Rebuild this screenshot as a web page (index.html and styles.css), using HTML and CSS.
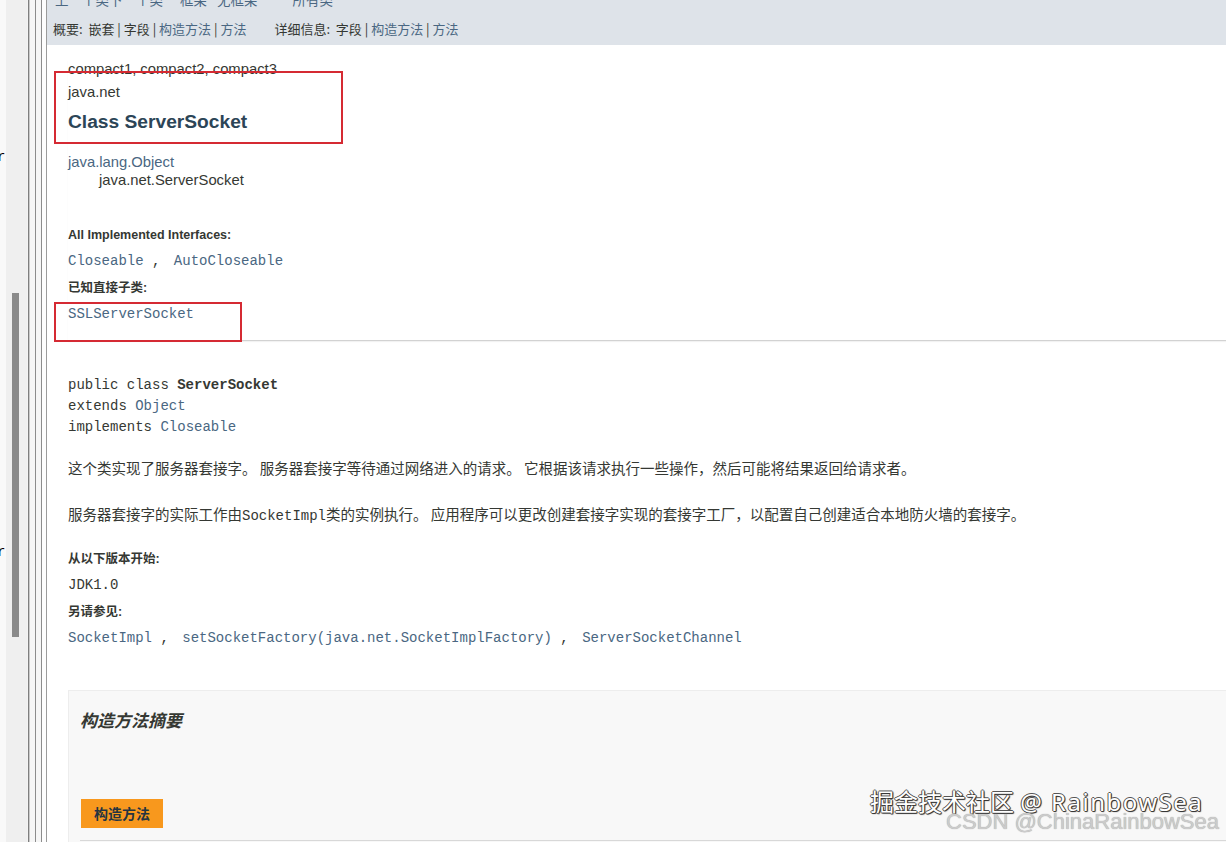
FILE: index.html
```html
<!DOCTYPE html>
<html lang="zh-CN">
<head>
    <meta charset="UTF-8">
    <meta name="viewport" content="width=device-width, initial-scale=1.0">
    <title>ServerSocket (Java Platform SE 8)</title>
    <link rel="stylesheet" href="styles.css">
</head>
<body>
<div class="window">
    <div class="gutter">
        <span class="stray first">r</span>
        <span class="stray second">r</span>
    </div>
    <div class="track"><div class="thumb"></div></div>
    <div class="frame-edge"></div>

    <div class="doc">
        <div class="topnav">
            <div class="navbar">
                <span>上一个类</span><span>下一个类</span>
                <span class="gap-a">框架</span><span class="gap-b">无框架</span>
                <span class="gap-c">所有类</span>
            </div>
            <div class="subnav">
                <span>概要:&nbsp; 嵌套 |&nbsp;字段 |&nbsp;<a>构造方法</a> |&nbsp;<a>方法</a></span>
                <span class="detail">详细信息:&nbsp; 字段 |&nbsp;<a>构造方法</a> |&nbsp;<a>方法</a></span>
            </div>
        </div>

        <div class="content">
            <div class="class-info">
                <div class="subtitle">compact1, compact2, compact3</div>
                <div class="subtitle pkg">java.net</div>
                <h2 class="title">Class ServerSocket</h2>

                <div class="inheritance">
                    <a>java.lang.Object</a>
                    <div class="child">java.net.ServerSocket</div>
                </div>

                <dl class="notes">
                    <dt class="first-dt">All Implemented Interfaces:</dt>
                    <dd><a>Closeable</a><span class="sep"> , </span><a>AutoCloseable</a></dd>
                    <dt>已知直接子类:</dt>
                    <dd><a>SSLServerSocket</a></dd>
                </dl>
            </div>

            <pre class="signature">public class <b>ServerSocket</b>
extends <a>Object</a>
implements <a>Closeable</a></pre>

            <p class="para">这个类实现了服务器套接字。 服务器套接字等待通过网络进入的请求。 它根据该请求执行一些操作，然后可能将结果返回给请求者。</p>
            <p class="para second">服务器套接字的实际工作由<code>SocketImpl</code>类的实例执行。 应用程序可以更改创建套接字实现的套接字工厂，以配置自己创建适合本地防火墙的套接字。</p>

            <dl class="notes since">
                <dt class="first-dt">从以下版本开始:</dt>
                <dd>JDK1.0</dd>
                <dt>另请参见:</dt>
                <dd><a>SocketImpl</a><span class="sep"> , </span><a>setSocketFactory(java.net.SocketImplFactory)</a><span class="sep"> , </span><a>ServerSocketChannel</a></dd>
            </dl>

            <div class="summary">
                <h3>构造方法摘要</h3>
                <div class="caption"><span class="tab">构造方法</span></div>
                <div class="table-top"></div>
            </div>
        </div>

        <!-- red marks drawn over the page -->
        <div class="mark mark-title"></div>
        <div class="mark mark-sub"></div>
    </div>

    <div class="wm-main">掘金技术社区 <span class="wm-latin">@ RainbowSea</span></div>
    <div class="wm-csdn">CSDN @ChinaRainbowSea</div>
</div>
</body>
</html>
```

FILE: styles.css
```css
body {
    margin: 0;
    font-family: "Liberation Sans", Arial, "Noto Sans CJK SC", sans-serif;
    color: #353833;
    background: #fff;
}

a {
    color: #4a6782;
}

.window {
    display: flex;
    height: 842px;
    overflow: hidden;
    position: relative;
}

/* left frame: stray text, scrollbar, frame borders */
.gutter {
    width: 6px;
    flex: none;
    background: #f9f9f9;
    display: flex;
    flex-direction: column;
    overflow: hidden;
    font-family: "Liberation Mono", monospace;
    font-size: 14px;
    line-height: 14px;
    color: #000;
}

.stray {
    margin-left: -3px;
}

.stray.first {
    margin-top: 150px;
}

.stray.second {
    margin-top: 381px;
}

.track {
    width: 21px;
    flex: none;
    background: #efefef;
}

.thumb {
    margin: 293px 0 0 6px;
    width: 7px;
    height: 344px;
    background: #8a8a8a;
}

.frame-edge {
    width: 20px;
    flex: none;
    background: linear-gradient(to right,
        #f3f3f3 0 1px, #7e7e7e 1px 2px, #c9c9c9 2px 3px, #f6f6f6 3px 8px,
        #8c8c8c 8px 9px, #f6f6f6 9px 14px, #8c8c8c 14px 15px,
        #fdfdfd 15px 19px, #9b9b9b 19px 20px);
}

.doc {
    flex: 1;
    min-width: 0;
    position: relative;
}

/* navigation bar */
.topnav {
    background: #dee3e9;
    height: 45px;
    padding-left: 6px;
    overflow: hidden;
}

.navbar {
    display: flex;
    margin-top: -9px;
    padding-left: 2px;
    font-family: "Noto Sans CJK SC", sans-serif;
    font-size: 13.5px;
    line-height: 16px;
    color: #4a6782;
    white-space: nowrap;
}

.navbar .gap-a {
    margin-left: 17px;
}

.navbar .gap-b {
    margin-left: 10px;
}

.navbar .gap-c {
    margin-left: 35px;
}

.subnav {
    margin-top: 14px;
    font-family: "Noto Sans CJK SC", sans-serif;
    font-size: 13px;
    line-height: 16px;
    white-space: nowrap;
}

.subnav .detail {
    margin-left: 25px;
}

/* class header */
.content {
    padding-left: 21px;
}

.class-info {
    padding-bottom: 17px;
    border-bottom: 1px solid #d2d2d2;
    box-shadow: 0 1px 1px rgba(0, 0, 0, 0.05);
}

.subtitle {
    margin-top: 15px;
    font-size: 14.8px;
    line-height: 18px;
}

.subtitle.pkg {
    margin-top: 5px;
}

.title {
    margin: 9px 0 0;
    font-size: 19.2px;
    line-height: 24px;
    color: #2c4557;
}

.inheritance {
    margin-top: 19px;
    font-size: 14.8px;
    line-height: 18px;
}

.inheritance .child {
    padding-left: 31px;
}

.notes {
    margin: 0;
}

.notes dt {
    margin-top: 10px;
    font-family: "Liberation Sans", "Noto Sans CJK SC", sans-serif;
    font-size: 12.5px;
    font-weight: bold;
    line-height: 16px;
}

.notes dt.first-dt {
    margin-top: 38px;
}

.notes dd {
    margin: 9px 0 0;
    font-family: "Liberation Mono", monospace;
    font-size: 14px;
    line-height: 18px;
    white-space: pre;
}

.sep {
    margin-right: 5px;
}

/* description */
.signature {
    margin: 34px 0 0;
    font-family: "Liberation Mono", monospace;
    font-size: 14px;
    line-height: 21px;
}

.para {
    margin: 20px 0 0;
    font-family: "Noto Sans CJK SC", sans-serif;
    font-size: 14.5px;
    line-height: 20px;
}

.para.second {
    margin-top: 26px;
}

.para code {
    font-family: "Liberation Mono", monospace;
    font-size: 14px;
}

.notes.since dt.first-dt {
    margin-top: 25px;
}

/* constructor summary */
.summary {
    margin-top: 43px;
    height: 200px;
    padding: 19px 0 0 11px;
    background: #f8f8f8;
    border: 1px solid #ededed;
    border-right: none;
}

.summary h3 {
    margin: 0;
    font-family: "Noto Sans CJK SC", sans-serif;
    font-size: 17px;
    font-style: italic;
    font-weight: bold;
    line-height: 20px;
    color: #353833;
}

.caption {
    margin-top: 69px;
    padding-left: 1px;
}

.tab {
    display: inline-block;
    height: 29px;
    padding: 0 13px;
    background: #f8981d;
    font-family: "Noto Sans CJK SC", sans-serif;
    font-size: 14px;
    font-weight: bold;
    line-height: 29px;
    color: #253441;
}

.table-top {
    margin-top: 12px;
    border-top: 1px solid #d8d8d8;
}

/* red annotation boxes */
.mark {
    position: absolute;
    left: 7px;
    border: 2px solid #d52a33;
    box-sizing: border-box;
}

.mark-title {
    top: 71px;
    width: 289px;
    height: 73px;
}

.mark-sub {
    top: 302px;
    width: 188px;
    height: 40px;
}

/* watermarks */
.wm-main {
    position: absolute;
    left: 870px;
    top: 788px;
    font-family: "Noto Sans", "Noto Sans CJK SC", sans-serif;
    font-size: 24px;
    line-height: 28px;
    color: #fff;
    white-space: nowrap;
    text-shadow: 1px 1px 1px #333, -1px 0 0 #555, 0 -1px 0 #555, 1px 0 0 #555, 0 1px 0 #555;
}

.wm-latin {
    letter-spacing: 1.5px;
}

.wm-csdn {
    position: absolute;
    left: 946px;
    top: 809px;
    font-family: "Liberation Sans", Arial, sans-serif;
    font-size: 22px;
    line-height: 26px;
    color: #cbcbcb;
    white-space: nowrap;
    text-shadow: 0 0 1px #9a9a9a;
}
```
